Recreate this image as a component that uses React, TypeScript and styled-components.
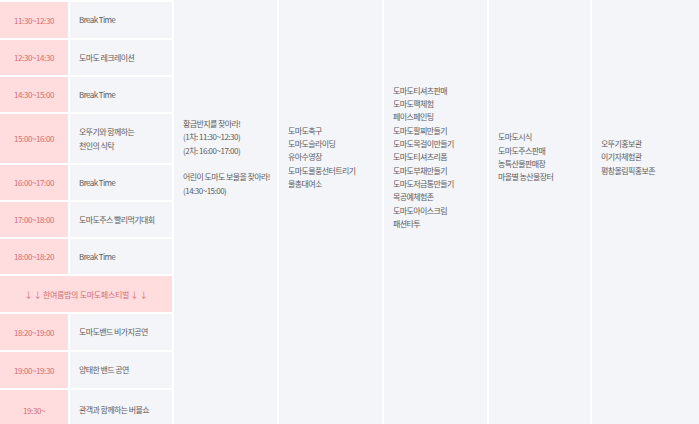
import React from "react";
import styled, { createGlobalStyle } from "styled-components";

const Global = createGlobalStyle`
  html, body { margin: 0; padding: 0; background: #fff; overflow: hidden; }
  body { font-family: "Noto Sans CJK KR", "Noto Sans", sans-serif; }
`;

const Board = styled.div`
  display: flex;
  gap: 2px;
  width: 699px;
  height: 424px;
  overflow: hidden;
  background: #fff;
`;

const LeftTable = styled.div`
  display: flex;
  flex-direction: column;
  gap: 2px;
  padding-top: 2px;
  width: 172px;
  flex: none;
`;

const RowBox = styled.div<{ $h: number }>`
  display: grid;
  grid-template-columns: 68px 102px;
  column-gap: 2px;
  height: ${(p) => p.$h}px;
  flex: none;
`;

const TimeCell = styled.div`
  background: #ffdcdd;
  color: #d66d71;
  font-size: 8px;
  letter-spacing: -0.4px;
  display: flex;
  align-items: center;
  justify-content: center;
`;

const ActCell = styled.div`
  background: #f4f5f9;
  color: #5c5c5c;
  font-size: 8px;
  letter-spacing: -0.6px;
  line-height: 14px;
  display: flex;
  flex-direction: column;
  justify-content: center;
  padding-left: 9px;
`;

const Banner = styled.div`
  background: #ffdcdd;
  color: #d66d71;
  font-size: 8px;
  letter-spacing: -0.3px;
  display: flex;
  align-items: center;
  justify-content: center;
  height: 36px;
  flex: none;
`;

const Column = styled.div<{ $w: number }>`
  width: ${(p) => p.$w}px;
  flex: none;
  background: #f4f5f9;
  color: #5c5c5c;
  font-size: 8px;
  letter-spacing: -0.6px;
  line-height: 13.3px;
  display: flex;
  flex-direction: column;
  justify-content: center;
  padding: 0 0 110px 9px;
  box-sizing: border-box;
`;

const Line = styled.div<{ $num?: boolean }>`
  white-space: nowrap;
  ${(p) => (p.$num ? "letter-spacing: -0.5px;" : "")}
`;

const Spacer = styled.div`
  height: 13.3px;
`;

type Row = { time: string; acts: string[]; h: number };

const rowsBefore: Row[] = [
  { time: "11:30~12:30", acts: ["Break Time"], h: 36 },
  { time: "12:30~14:30", acts: ["도마도 레크레이션"], h: 35 },
  { time: "14:30~15:00", acts: ["Break Time"], h: 35 },
  { time: "15:00~16:00", acts: ["오뚜기와 함께하는", "천인의 식탁"], h: 49 },
  { time: "16:00~17:00", acts: ["Break Time"], h: 35 },
  { time: "17:00~18:00", acts: ["도마도주스 빨리먹기대회"], h: 35 },
  { time: "18:00~18:20", acts: ["Break Time"], h: 35 },
];

const rowsAfter: Row[] = [
  { time: "18:20~19:00", acts: ["도마도밴드 비가지공연"], h: 36 },
  { time: "19:00~19:30", acts: ["양태한 밴드 공연"], h: 36 },
  { time: "19:30~", acts: ["관객과 함께하는 버블쇼"], h: 40 },
];

const renderRow = (r: Row) => (
  <RowBox key={r.time} $h={r.h}>
    <TimeCell>{r.time}</TimeCell>
    <ActCell>
      {r.acts.map((a) => (
        <Line key={a}>{a}</Line>
      ))}
    </ActCell>
  </RowBox>
);

const col5 = [
  "도마도티셔츠판매",
  "도마도팩체험",
  "페이스페인팅",
  "도마도팔찌만들기",
  "도마도목걸이만들기",
  "도마도티셔츠리폼",
  "도마도부채만들기",
  "도마도저금통만들기",
  "목공예체험존",
  "도마도아이스크림",
  "패션타투",
];

export default function App() {
  return (
    <>
      <Global />
      <Board>
        <LeftTable>
          {rowsBefore.map(renderRow)}
          <Banner>↓ ↓ 한여름밤의 도마도페스티벌 ↓ ↓</Banner>
          {rowsAfter.map(renderRow)}
        </LeftTable>
        <Column $w={103}>
          <Line>황금반지를 찾아라!</Line>
          <Line $num>(1차: 11:30~12:30)</Line>
          <Line $num>(2차: 16:00~17:00)</Line>
          <Spacer />
          <Line>어린이 도마도 보물을 찾아라!</Line>
          <Line $num>(14:30~15:00)</Line>
        </Column>
        <Column $w={103}>
          <Line>도마도축구</Line>
          <Line>도마도슬라이딩</Line>
          <Line>유아수영장</Line>
          <Line>도마도물풍선터트리기</Line>
          <Line>물총대여소</Line>
        </Column>
        <Column $w={103}>
          {col5.map((t) => (
            <Line key={t}>{t}</Line>
          ))}
        </Column>
        <Column $w={101}>
          <Line>도마도시식</Line>
          <Line>도마도주스판매</Line>
          <Line>농특산물판매장</Line>
          <Line>마을별 농산물장터</Line>
        </Column>
        <Column $w={107}>
          <Line>오뚜기홍보관</Line>
          <Line>이기자체험관</Line>
          <Line>평창올림픽홍보존</Line>
        </Column>
      </Board>
    </>
  );
}
